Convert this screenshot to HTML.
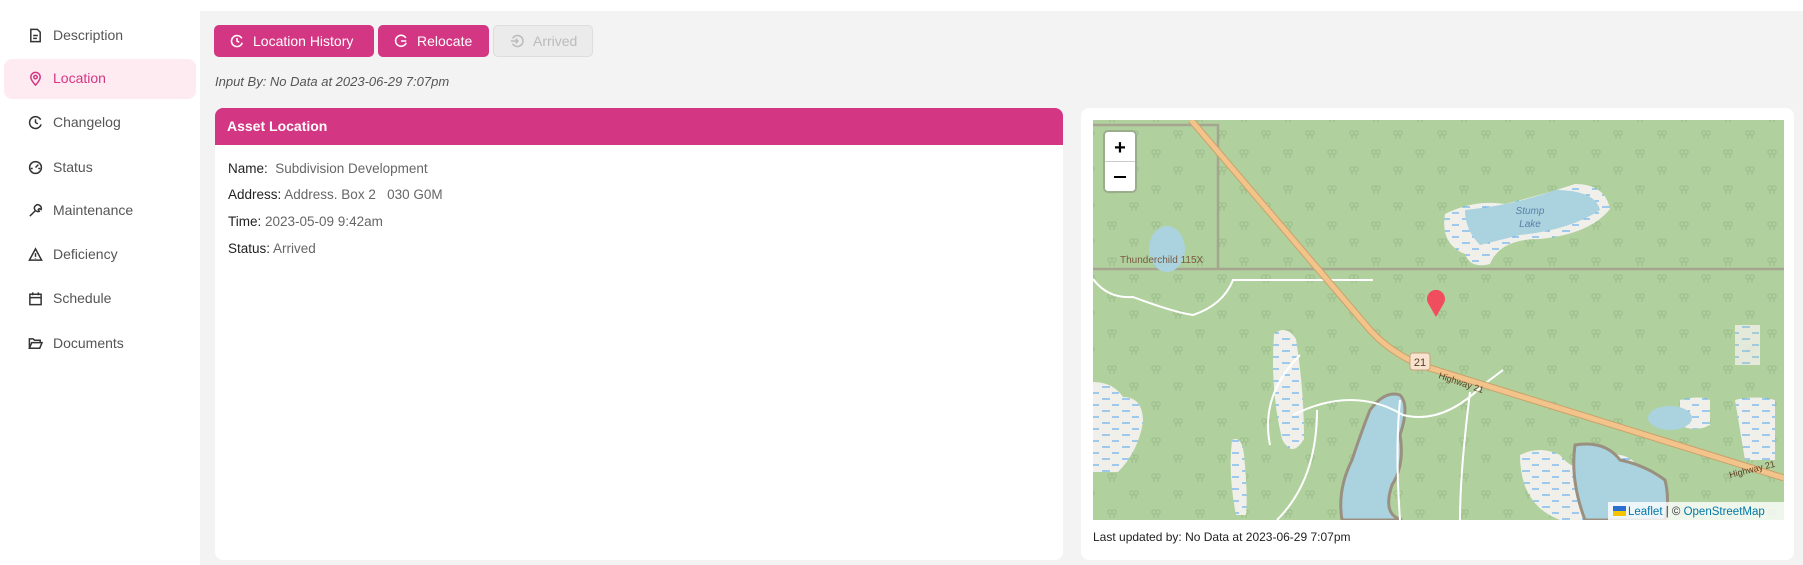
<!DOCTYPE html>
<html><head><meta charset="utf-8"><style>
*{box-sizing:border-box;margin:0;padding:0}
body{width:1803px;height:565px;overflow:hidden;background:#fff;font-family:"Liberation Sans",sans-serif;position:relative;color:#333}
.main{position:absolute;left:200px;top:11px;width:1603px;height:554px;background:#f3f3f3}
.nav{position:absolute;left:28px;font-size:14px;color:#555;display:flex;align-items:center;height:20px}
.nav svg{width:15px;height:15px;margin-right:10px;fill:none;stroke:#333;stroke-width:1.6}
.hl{position:absolute;left:4px;top:59px;width:192px;height:40px;background:#fdebf1;border-radius:8px}
.btn{position:absolute;top:25px;height:32px;border-radius:5px;background:#d33682;color:#fff;font-size:14px;display:flex;align-items:center;padding-left:16px}
.btn svg{width:14px;height:14px;fill:none;stroke:#fff;stroke-width:1.8;margin-right:9px}
.card{position:absolute;background:#fff;border-radius:8px}
.lbl{position:absolute;left:228px;font-size:13.5px;color:#222}
.lbl span{color:#666}
</style></head><body>
<div class="main"></div>
<div class="hl"></div>
<div class="nav" style="top:25px"><svg viewBox="0 0 16 16"><path d="M3 1.5h7l3 3v10H3z M5.5 8h5 M5.5 11h4"/></svg>Description</div>
<div class="nav" style="top:68px;color:#d33682"><svg viewBox="0 0 16 16" style="stroke:#d33682"><path d="M8 15s-5-5-5-8.5a5 5 0 0110 0C13 10 8 15 8 15z"/><circle cx="8" cy="6.5" r="1.8"/></svg>Location</div>
<div class="nav" style="top:112px"><svg viewBox="0 0 16 16"><path d="M13.5 5A6.3 6.3 0 1014 10 M8 4.5V8l2.5 1.5"/></svg>Changelog</div>
<div class="nav" style="top:157px"><svg viewBox="0 0 16 16"><circle cx="8" cy="8" r="6.3"/><path d="M8 8l3-3 M3 9h2 M11 9h2"/></svg>Status</div>
<div class="nav" style="top:200px"><svg viewBox="0 0 16 16"><path d="M2 14l6-6 M9 2a4 4 0 015 5l-2-1-1 1 1 2a4 4 0 01-5-5z"/></svg>Maintenance</div>
<div class="nav" style="top:244px"><svg viewBox="0 0 16 16"><path d="M8 2L1.5 14h13z M8 6.5v4 M8 12v.5"/></svg>Deficiency</div>
<div class="nav" style="top:288px"><svg viewBox="0 0 16 16"><path d="M2 3.5h12v11H2z M2 7h12 M5 1.5v3 M11 1.5v3"/></svg>Schedule</div>
<div class="nav" style="top:333px"><svg viewBox="0 0 16 16"><path d="M1.5 13V3h4l1.5 1.5H13V7 M1.5 13L4 7h11l-2.5 6z"/></svg>Documents</div>

<div class="btn" style="left:214px;width:160px"><svg viewBox="0 0 16 16"><path d="M13.5 5A6.3 6.3 0 1014 10 M8 4.5V8l2.5 1.5"/></svg>Location History</div>
<div class="btn" style="left:378px;width:111px"><svg viewBox="0 0 16 16"><path d="M13.5 4.5A6.3 6.3 0 1014 10 M8 8h6"/></svg>Relocate</div>
<div class="btn" style="left:493px;width:100px;background:#ebebeb;color:#bbb;border:1px solid #ddd"><svg viewBox="0 0 16 16" style="stroke:#bbb"><path d="M3 5a6.3 6.3 0 110 6 M1 8h8 M6.5 5.5L9 8l-2.5 2.5"/></svg>Arrived</div>
<div style="position:absolute;left:215px;top:74px;font-size:13px;font-style:italic;color:#555">Input By: No Data at 2023-06-29 7:07pm</div>

<div class="card" style="left:215px;top:108px;width:848px;height:452px"></div>
<div style="position:absolute;left:215px;top:108px;width:848px;height:37px;background:#d33682;border-radius:8px 8px 0 0;color:#fff;font-weight:bold;font-size:14px;padding:10px 12px">Asset Location</div>
<div class="lbl" style="top:161px">Name: &nbsp;<span>Subdivision Development</span></div>
<div class="lbl" style="top:187px">Address: <span>Address. Box 2 &nbsp; 030 G0M</span></div>
<div class="lbl" style="top:214px">Time: <span>2023-05-09 9:42am</span></div>
<div class="lbl" style="top:241px">Status: <span>Arrived</span></div>

<div class="card" style="left:1081px;top:108px;width:713px;height:452px"></div>
<svg style="position:absolute;left:1093px;top:120px" width="691" height="400" viewBox="1093 120 691 400">
<defs><pattern id="t" width="44" height="36" patternUnits="userSpaceOnUse"><g fill="none" stroke="#98bb88" stroke-width="0.9"><circle cx="10" cy="8" r="2.2"/><path d="M10 10v4"/><circle cx="14" cy="8" r="2.2"/><path d="M14 10v4"/><circle cx="32" cy="25" r="2.2"/><path d="M32 27v4"/><circle cx="36" cy="25" r="2.2"/><path d="M36 27v4"/></g></pattern>
<pattern id="w" width="20" height="12" patternUnits="userSpaceOnUse"><rect width="20" height="12" fill="#f1efe9"/><path d="M2 3h8 M12 9h7" stroke="#4aa2ee" stroke-width="1"/></pattern></defs>
<rect x="1093" y="120" width="691" height="400" fill="#b0d09e"/>
<rect x="1093" y="120" width="691" height="400" fill="url(#t)"/>
<path d="M1093 125H1218V269H1093 M1218 269H1784" stroke="#a39a8c" stroke-width="2.5" fill="none" opacity=".8"/>
<ellipse cx="1167" cy="249" rx="18" ry="23" fill="#aad3df"/>
<path d="M1445 214q30-15 60-10q40-10 70-20q30 0 35 25q-20 25-70 30q-40 0-50 25q-20 5-25-10q-25-10-20-40z" fill="url(#w)"/>
<path d="M1465 210q50-5 90-20q40 0 45 20q-30 20-80 25q-20 5-40 10q-15-15-15-35z" fill="#aad3df"/>
<text x="1530" y="214" font-size="10" font-style="italic" fill="#5a7fa8" text-anchor="middle">Stump</text>
<text x="1530" y="227" font-size="10" font-style="italic" fill="#5a7fa8" text-anchor="middle">Lake</text>
<path d="M1274 334q12-10 22 5q8 50 8 100q-12 20-22 0q-12-50-8-105z" fill="url(#w)"/>
<path d="M1232 440q10-5 12 15q4 40 2 60h-10q-8-40-4-75z" fill="url(#w)"/>
<path d="M1093 382q20 0 30 15q20 0 20 25q-5 30-25 50h-25z" fill="url(#w)"/>
<path d="M1735 325h25v40h-25z" fill="url(#w)" opacity=".8"/>
<path d="M1680 400q20-5 30 0v25q-15 8-30 0z M1735 400q20-5 40 0v60h-30z" fill="url(#w)"/>
<ellipse cx="1670" cy="418" rx="22" ry="12" fill="#aad3df"/>
<path d="M1370 410q15-20 30-15q10 10 0 40q5 30-8 50q-10 30 10 35h-60q-5-30 10-60q10-30 18-50z" fill="#aad3df" stroke="#9a9080" stroke-width="3"/>
<path d="M1520 455q20-10 40 0q20 25 40 0q30-5 40 15q20 20 10 50h-90q-40-15-40-65z" fill="url(#w)"/>
<path d="M1575 445q30-5 45 15q25 5 45 20q5 20 0 40h-80q-15-40-10-75z" fill="#aad3df" stroke="#9a9080" stroke-width="3"/>
<path d="M1093 279q15 20 40 18q40 15 60 18q30-10 40-35h140 M1300 355q-40 40-30 90 M1293 415q60-30 110 0q40 10 80-30l20-15 M1400 400q-5 50 0 120 M1277 520q40-40 40-110 M1470 392q-10 80-10 128" stroke="#fff" stroke-width="2" fill="none"/>
<path d="M1191 120L1370 330Q1390 352 1420 365L1784 478" stroke="#c9a36a" stroke-width="7" fill="none"/>
<path d="M1191 120L1370 330Q1390 352 1420 365L1784 478" stroke="#f2c38a" stroke-width="5" fill="none"/>
<rect x="1410" y="353" width="20" height="17" rx="3" fill="#f7e3cf" stroke="#cba17a"/>
<text x="1420" y="366" font-size="11" fill="#5a3d20" text-anchor="middle">21</text>
<text x="1438" y="378" font-size="9" fill="#5a3d20" transform="rotate(19 1438 378)">Highway 21</text>
<text x="1730" y="478" font-size="9" fill="#5a3d20" transform="rotate(-14 1730 478)">Highway 21</text>
<text x="1120" y="263" font-size="10" fill="#7a5a40">Thunderchild 115X</text>
<path d="M1436 317l-8-14a9 9 0 1116 0z" fill="#f04e5e"/>
<rect x="1104" y="131" width="32" height="61" rx="4" fill="#fff" stroke="#9aae8e" stroke-width="2"/>
<path d="M1105 161.5h30" stroke="#ccc"/>
<text x="1120" y="154" font-size="20" font-weight="bold" text-anchor="middle" fill="#000">+</text>
<path d="M1114 177h12" stroke="#000" stroke-width="2"/>
<rect x="1608" y="502" width="176" height="18" fill="#fff" opacity=".8"/>
<rect x="1613" y="506" width="13" height="5" fill="#2a6fcf"/><rect x="1613" y="511" width="13" height="5" fill="#f5c400"/>
<text x="1628" y="515" font-size="11.5" fill="#0078a8">Leaflet <tspan fill="#333">| ©</tspan> OpenStreetMap</text>
</svg>
<div style="position:absolute;left:1093px;top:530px;font-size:12px;color:#222">Last updated by: No Data at 2023-06-29 7:07pm</div>
</body></html>
